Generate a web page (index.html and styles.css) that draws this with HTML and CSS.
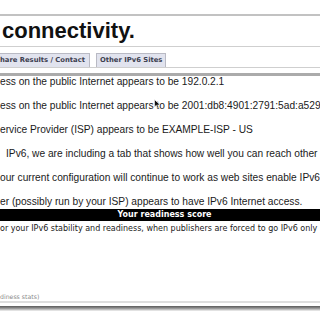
FILE: index.html
```html
<html>
<head>
	<title>Test your IPv6 connectivity</title>
	<meta charset="UTF-8">
	<link rel="stylesheet" href="styles.css">
</head>
<body>

	<div class="top-rule"></div>
	<h1 class="title">connectivity.</h1>
	<div class="thin-rule"></div>

	<div class="tabs">
		<div class="tab">hare Results / Contact</div>
		<div class="tab">Other IPv6 Sites</div>
	</div>
	<div class="thick-rule"></div>

	<div class="results">
		<p>ess on the public Internet appears to be 192.0.2.1</p>
		<p>ess on the public Internet appears to be 2001:db8:4901:2791:5ad:a529</p>
		<p>ervice Provider (ISP) appears to be EXAMPLE-ISP - US</p>
		<p class="indent">IPv6, we are including a tab that shows how well you can reach other</p>
		<p>our current configuration will continue to work as web sites enable IPv6</p>
		<p>er (possibly run by your ISP) appears to have IPv6 Internet access.</p>
		<svg class="cursor" width="7" height="10" viewBox="0 0 7 10">
			<path d="M0.5 0.5 L0.5 8 L2.3 6.3 L3.6 9.2 L4.8 8.7 L3.6 5.9 L6 5.9 Z" fill="#111" stroke="#fff" stroke-width="0.6"/>
		</svg>
	</div>

	<div class="score-bar">Your readiness score</div>
	<p class="score-note">or your IPv6 stability and readiness, when publishers are forced to go IPv6 only</p>

	<p class="stats">diness stats)</p>
	<div class="foot-rule"></div>
	<div class="window-edge"></div>

</body>
</html>
```

FILE: styles.css
```css
* {
	margin: 0;
	padding: 0;
}

body {
	background: #fff;
	font-family: "Liberation Sans", Arial, sans-serif;
	color: #1a1a1a;
	width: 320px;
	overflow: hidden;
}

.top-rule {
	margin-top: 14px;
	height: 2px;
	background: #c2c2c2;
}

.title {
	font-family: "Liberation Sans", Arial, sans-serif;
	font-size: 22px;
	font-weight: bold;
	line-height: 30px;
	color: #111;
	padding-left: 2px;
}

.thin-rule {
	height: 1px;
	background: #cfcfcf;
}

.tabs {
	display: flex;
	gap: 6px;
	padding-top: 6px;
	border-bottom: 1px solid #cfcfcf;
}

.tab {
	height: 13px;
	line-height: 13px;
	padding: 0 3px 0 3px;
	background: #e1e3ee;
	border: 1px solid #b9bac4;
	border-bottom: none;
	font-family: "DejaVu Sans", Verdana, sans-serif;
	font-size: 6.8px;
	font-weight: bold;
	color: #3c4050;
	white-space: nowrap;
}

.tab:first-child {
	border-left: none;
	padding-left: 0;
	width: 86px;
}

.thick-rule {
	margin-top: 5px;
	height: 3px;
	background: #ababab;
}

.results {
	position: relative;
}

.results p {
	font-size: 10.2px;
	line-height: 12px;
	margin-bottom: 12px;
	white-space: nowrap;
}

.results p.indent {
	padding-left: 6px;
}

.results p:last-of-type {
	margin-bottom: 1px;
}

.cursor {
	position: absolute;
	left: 154px;
	top: 23px;
}

.score-bar {
	height: 12px;
	line-height: 12px;
	background: #000;
	color: #fff;
	text-align: center;
	font-family: "DejaVu Sans", Verdana, sans-serif;
	font-size: 8px;
	font-weight: bold;
	padding-left: 9px;
}

.score-note {
	margin-top: 2px;
	font-family: "DejaVu Sans", Verdana, sans-serif;
	font-size: 8px;
	line-height: 12px;
	white-space: nowrap;
	color: #1a1a1a;
}

.stats {
	margin-top: 57px;
	font-family: "DejaVu Sans", Verdana, sans-serif;
	font-size: 6.2px;
	line-height: 9px;
	color: #8a8a8a;
}

.foot-rule {
	height: 2px;
	background: #dedede;
}

.window-edge {
	margin-top: 3px;
	height: 5px;
	background: linear-gradient(#5a5a5a, #8a8a8a 40%, #d0d0d0 80%, #f4f4f4);
}
```
